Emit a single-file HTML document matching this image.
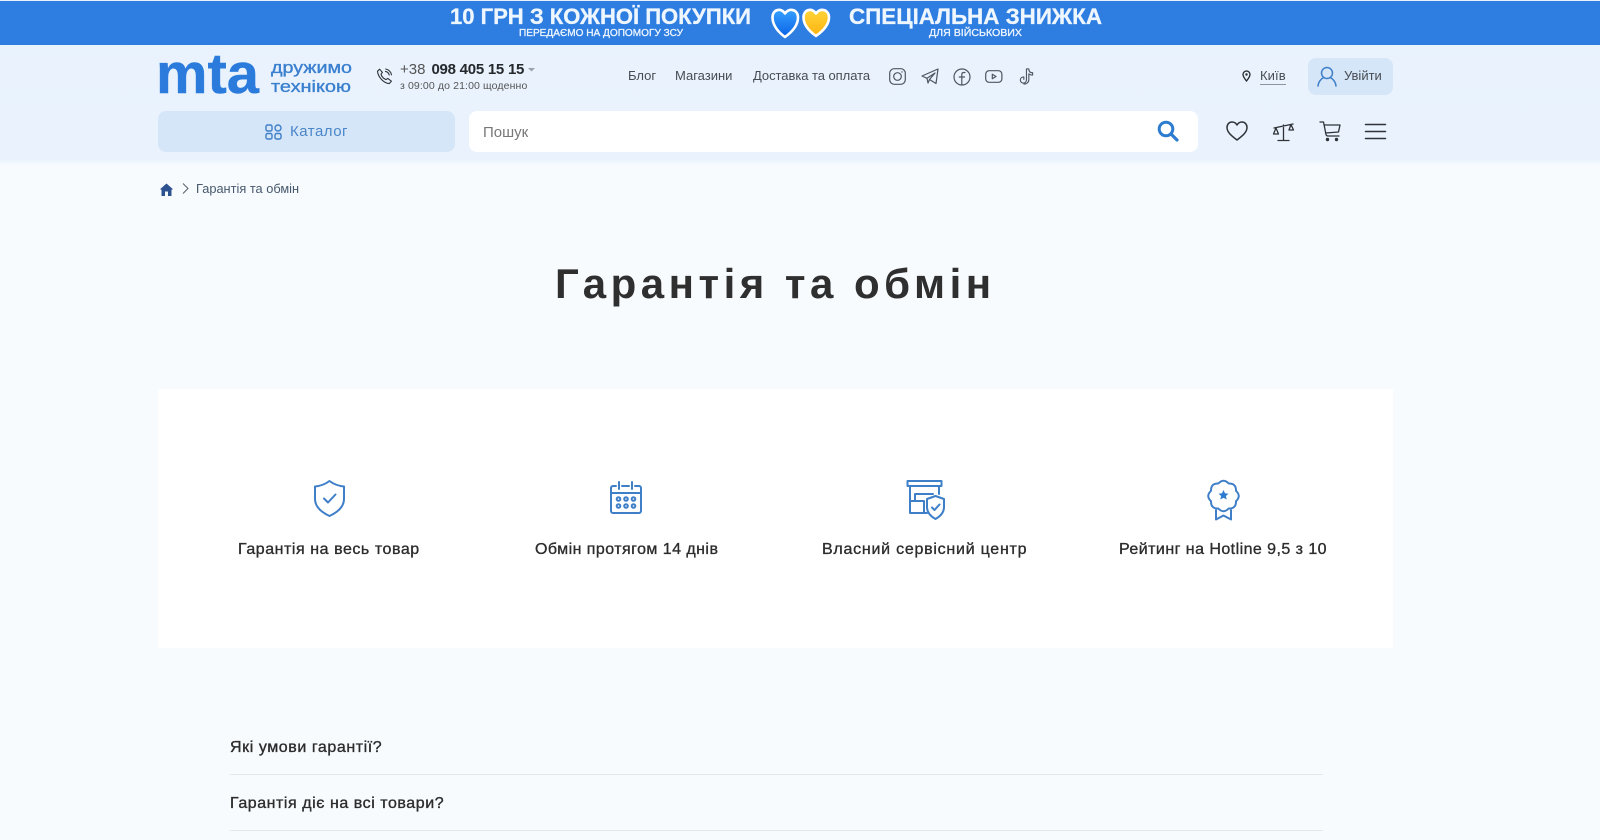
<!DOCTYPE html>
<html lang="uk"><head><meta charset="utf-8"><title>Гарантія та обмін</title>
<style>
*{box-sizing:border-box}
html,body{margin:0;padding:0}
body{width:1600px;height:840px;overflow:hidden;position:relative;background:#f7fbfe;font-family:"Liberation Sans","Noto Sans CJK SC",sans-serif;color:#2d2d2d}
.a{position:absolute;white-space:nowrap}
.m{-webkit-text-stroke:.35px currentColor}
svg{position:absolute;overflow:visible}
.i{fill:none;stroke:#3f7fc8;stroke-width:2;stroke-linecap:round;stroke-linejoin:round}
.g{fill:none;stroke:#4d5661;stroke-width:1.2;stroke-linecap:round;stroke-linejoin:round}
.d{fill:none;stroke:#2f3338;stroke-width:1.5;stroke-linecap:round;stroke-linejoin:round}
</style></head><body>
<div class="a" style="left:0;top:0;width:1600px;height:165px;background:linear-gradient(#e8f2fd 0,#eaf3fd 160px,#f7fbfe 165px)"></div>
<div class="a" style="left:0;top:1px;width:1600px;height:44px;background:#2e7de0"></div>
<svg style="left:0;top:0" width="1600" height="45" font-family="Liberation Sans" fill="#eef6ff" text-anchor="start">
<defs><linearGradient id="b" x1="0" y1="0" x2="0" y2="1"><stop offset="0" stop-color="#35a0ff"/><stop offset="1" stop-color="#0a62e6"/></linearGradient><linearGradient id="y" x1="0" y1="0" x2="0" y2="1"><stop offset="0" stop-color="#ffd43a"/><stop offset="1" stop-color="#fdb40f"/></linearGradient></defs>
<text x="450" y="24" font-size="22" font-weight="700" stroke="#eef6ff" stroke-width=".3" textLength="301" lengthAdjust="spacingAndGlyphs">10 ГРН З КОЖНОЇ ПОКУПКИ</text>
<text x="519" y="36" font-size="10.5" textLength="164" lengthAdjust="spacingAndGlyphs" stroke="#eef6ff" stroke-width=".3">ПЕРЕДАЄМО НА ДОПОМОГУ ЗСУ</text>
<text x="849" y="24" font-size="22" font-weight="700" stroke="#eef6ff" stroke-width=".3" textLength="253" lengthAdjust="spacingAndGlyphs">СПЕЦІАЛЬНА ЗНИЖКА</text>
<text x="929" y="36" font-size="10.5" textLength="93" lengthAdjust="spacingAndGlyphs" stroke="#eef6ff" stroke-width=".3">ДЛЯ ВІЙСЬКОВИХ</text>
<path d="M816 36C809 31 803.500 25 803.500 17.500C803.500 9 812.500 7.500 816 13.500C819.500 7.500 829 9 829 17.500C829 25 823 31 816 36Z" fill="url(#y)" stroke="#fff" stroke-width="2.6" stroke-linejoin="round"/>
<path d="M785 37C778 32 772.500 25 772.500 17.500C772.500 9 781.500 7.500 785 13.500C788.500 7.500 798 9 798 17.500C798 25 792 32 785 37Z" fill="url(#b)" stroke="#fff" stroke-width="2.6" stroke-linejoin="round"/>
</svg>

<svg style="left:0;top:0" width="400" height="110" font-family="Liberation Sans">
<text x="156" y="93" font-size="57" font-weight="700" fill="#2b7bdc" stroke="#2b7bdc" stroke-width=".4" textLength="103" lengthAdjust="spacingAndGlyphs">mta</text>
<text x="271" y="73" font-size="17" fill="#3b80cf" stroke="#3b80cf" stroke-width=".35" textLength="81" lengthAdjust="spacingAndGlyphs">дружимо</text>
<text x="271" y="92" font-size="17" fill="#3b80cf" stroke="#3b80cf" stroke-width=".35" textLength="80" lengthAdjust="spacingAndGlyphs">технікою</text>
</svg>
<svg style="left:376px;top:68px" width="17" height="17" viewBox="0 0 17 17"><path class="d" style="stroke-width:1.1" d="M1.5 3.2 3.6 1.2 6.4 4.4 5 6.2C5.600 8.400 7.600 10.600 10 11.600L11.800 10.400 15.400 13.200 13.200 15.600C7.500 15 2 9 1.500 3.200ZM9.500 3.400C11.500 3.800 12.800 5 13.200 7M9.700 1C12.700 1.500 15 3.800 15.500 6.800"/></svg>
<div class="a" style="left:400px;top:61px;line-height:18px;font-size:15px;color:#555">+38<b style="color:#25282c;font-weight:700;letter-spacing:-.25px;margin-left:6px">098 405 15 15</b></div>
<svg style="left:528px;top:68px" width="7" height="4"><path d="M0 0H7L3.500 3.500Z" fill="#9aa3ad"/></svg>
<div class="a" style="left:400px;top:79px;line-height:14px;font-size:10.500px;color:#555;letter-spacing:.12px">з 09:00 до 21:00 щоденно</div>

<div class="a" style="left:628px;top:68px;line-height:16px;font-size:13px;color:#474c52">Блог</div>
<div class="a" style="left:675px;top:68px;line-height:16px;font-size:13px;color:#474c52">Магазини</div>
<div class="a" style="left:753px;top:68px;line-height:16px;font-size:13px;color:#474c52;letter-spacing:-.05px">Доставка та оплата</div>

<svg style="left:889px;top:68px" width="17" height="17" viewBox="0 0 17 17"><rect class="g" x=".7" y=".7" width="15.600" height="15.600" rx="4.500"/><circle class="g" cx="8.500" cy="8.500" r="3.800"/><circle cx="13" cy="4" r=".7" fill="#4d5661"/></svg>
<svg style="left:921px;top:68px" width="18" height="17" viewBox="0 0 18 17"><path class="g" d="M17 1 1 8 6 10.300 14 5 8.500 11.500 15 15.500ZM6 10.300 7 15 8.500 11.500"/></svg>
<svg style="left:953px;top:68px" width="18" height="18" viewBox="0 0 18 18"><circle class="g" cx="9" cy="9" r="8"/><path class="g" d="M12 4.500H10.800C9.500 4.500 8.800 5.300 8.800 6.500V16.800M6.300 9H11.500"/></svg>
<svg style="left:985px;top:70px" width="18" height="13" viewBox="0 0 18 13"><rect class="g" x=".7" y=".7" width="16.200" height="11.600" rx="3.500"/><path class="g" d="M7.300 4.200 11 6.500 7.300 8.800Z"/></svg>
<svg style="left:1018px;top:68px" width="16" height="17" viewBox="0 0 16 18"><path class="g" d="M8.500 1V12.500C8.500 14.500 7 16 5.300 16 3.500 16 2 14.600 2 12.700 2 10.800 3.500 9.500 5.700 9.500V12M8.500 1H11C11 3.500 12.500 5 15 5V7.500C13 7.500 11.800 7 11 6.200V12.500C11 15 8.800 17 5.800 17"/></svg>

<svg style="left:1242px;top:70px" width="9" height="12" viewBox="0 0 9 12"><path d="M4.500 11C2.500 8.500 1 6.500 1 4.500A3.500 3.500 0 0 1 8 4.500C8 6.500 6.500 8.500 4.500 11Z" fill="none" stroke="#25282c" stroke-width="1.300"/><circle cx="4.500" cy="4.500" r="1.200" fill="#25282c"/></svg>
<div class="a" style="left:1260px;top:68px;line-height:16px;font-size:13px;color:#474c52;letter-spacing:.1px">Київ</div>
<div class="a" style="left:1260px;top:84px;width:26px;height:1px;background:#8d949c"></div>
<div class="a" style="left:1308px;top:58px;width:85px;height:37px;border-radius:8px;background:#d6e6f9"></div>
<svg style="left:1317px;top:66px" width="20" height="21" viewBox="0 0 20 21"><circle class="i" style="stroke-width:1.500" cx="10" cy="7" r="5.500"/><path class="i" style="stroke-width:1.500" d="M1 20C1.500 15.500 4.500 12.500 6.500 11.700M19 20C18.500 15.500 15.500 12.500 13.500 11.700"/></svg>
<div class="a" style="left:1344px;top:68px;line-height:16px;font-size:13px;color:#474c52">Увійти</div>

<div class="a" style="left:158px;top:111px;width:297px;height:41px;border-radius:8px;background:#d6e6f9"></div>
<svg style="left:265px;top:124px" width="17" height="16" viewBox="0 0 17 16"><g class="i" style="stroke-width:1.400"><rect x="1" y="1" width="6" height="6" rx="1.500"/><circle cx="13" cy="4" r="3"/><rect x="1" y="9.500" width="6" height="5.500" rx="1.500"/><rect x="10" y="9.500" width="6" height="5.500" rx="1.500"/></g></svg>
<div class="a" style="left:290px;top:122px;line-height:19px;font-size:15px;color:#4a86c8;letter-spacing:.5px">Каталог</div>
<div class="a" style="left:469px;top:111px;width:729px;height:41px;border-radius:8px;background:#fff"></div>
<div class="a" style="left:483px;top:123px;line-height:19px;font-size:15px;color:#777">Пошук</div>
<svg style="left:1157px;top:120px" width="22" height="22" viewBox="0 0 22 22"><circle cx="9" cy="9" r="6.800" fill="none" stroke="#2e7cd0" stroke-width="3"/><path d="M14 14 20 20" stroke="#2e7cd0" stroke-width="3.200" stroke-linecap="round"/></svg>
<svg style="left:1226px;top:121px" width="22" height="20" viewBox="0 0 22 20"><path class="d" d="M11 19C5 14.500 1 11 1 6.500 1 3 3.500 1 6 1 8.200 1 10 2.200 11 4 12 2.200 13.800 1 16 1 18.500 1 21 3 21 6.500 21 11 17 14.500 11 19Z"/></svg>
<svg style="left:1272px;top:122px" width="23" height="20" viewBox="0 0 23 20"><path class="d" style="stroke-width:1.300" d="M11.500 3V18.500M6 18.500H17M2 6 21 2M4 6 1.500 12H6.500ZM19 2.500 17 8H21.500Z"/></svg>
<svg style="left:1319px;top:121px" width="22" height="21" viewBox="0 0 22 21"><path class="d" style="stroke-width:1.300" d="M1 1H4.500L7 13.500C7.200 14.500 7.800 15 9 15H20M5 4H21L19.500 11 6.500 12"/><circle cx="8.500" cy="18.500" r="1.700" fill="#2f3338"/><circle cx="17.500" cy="18.500" r="1.700" fill="#2f3338"/></svg>
<svg style="left:1365px;top:123px" width="21" height="17" viewBox="0 0 21 17"><path class="d" d="M.5 1.500H20.500M.5 8.500H20.500M.5 15.500H20.500"/></svg>

<svg style="left:160px;top:183px" width="13" height="13" viewBox="0 0 13 13"><path d="M6.500 .5 13 6.200 11.500 6.800V13H8V8.500H5V13H1.500V6.800L0 6.200Z" fill="#2e528f"/></svg>
<svg style="left:182px;top:183px" width="7" height="11" viewBox="0 0 7 11"><path d="M1 .5 6 5.500 1 10.500" fill="none" stroke="#555e69" stroke-width="1"/></svg>
<div class="a" style="left:196px;top:181px;line-height:16px;font-size:12.800px;color:#47586c">Гарантія та обмін</div>

<div class="a" style="left:555px;top:259px;line-height:50px;font-size:42px;font-weight:700;color:#2f2f2f;letter-spacing:4.500px">Гарантія та обмін</div>

<div class="a" style="left:158px;top:389px;width:1235px;height:259px;background:#fff"></div>

<svg style="left:314px;top:480px" width="31" height="37" viewBox="0 0 31 37"><path class="i" d="M15.500 1C19.500 4 25 6 30 6.500V19C30 27 23 32.500 15.500 36 8 32.500 1 27 1 19V6.500C6 6 11.500 4 15.500 1Z"/><path class="i" d="M10 18.500 14 22.500 21.500 14.500"/></svg>
<svg style="left:610px;top:481px" width="32" height="33" viewBox="0 0 32 33"><path class="i" d="M6 5H3A2 2 0 0 0 1 7V30A2 2 0 0 0 3 32H29A2 2 0 0 0 31 30V7A2 2 0 0 0 29 5H25M12 5H19M1 12H31M9 1V8M22 1V8"/><g fill="none" stroke="#3f7fc8" stroke-width="2"><circle cx="8.500" cy="18" r="1.800"/><circle cx="16" cy="18" r="1.800"/><circle cx="23.500" cy="18" r="1.800"/><circle cx="8.500" cy="25" r="1.800"/><circle cx="16" cy="25" r="1.800"/><circle cx="23.500" cy="25" r="1.800"/></g></svg>
<svg style="left:906px;top:480px" width="39" height="40" viewBox="0 0 39 40"><path class="i" d="M1.500 1H35.500V6H1.500ZM4 6V33H21M33 6V14M9 14H27M9 14V21M4 21H18V33"/><path class="i" d="M29.500 16 38 19V27C38 33 34 36.500 29.500 39 25 36.500 21 33 21 27V19Z"/><path class="i" d="M26 27.500 28.500 30 33.500 24.500"/></svg>
<svg style="left:1208px;top:479px" width="31" height="42" viewBox="0 0 31 42"><path class="i" d="M28 11.800Q33.500 17 28 22.200Q28.200 29.700 20.700 29.500Q15.500 35 10.300 29.500Q2.800 29.700 3 22.200Q-2.500 17 3 11.800Q2.800 4.300 10.300 4.500Q15.500 -1 20.700 4.500Q28.200 4.300 28 11.800Z"/><path class="i" d="M8 31V40.500L15.500 36.500 23 40.500V31"/><path d="M15.500 11 17 14.300 20.500 14.700 17.900 17 18.700 20.500 15.500 18.700 12.300 20.500 13.100 17 10.500 14.700 14 14.300Z" fill="#2e7cd0"/></svg>

<div class="a m" style="left:238px;top:540px;line-height:20px;font-size:16px;letter-spacing:.55px">Гарантія на весь товар</div>
<div class="a m" style="left:535px;top:540px;line-height:20px;font-size:16px;letter-spacing:.45px">Обмін протягом 14 днів</div>
<div class="a m" style="left:822px;top:540px;line-height:20px;font-size:16px;letter-spacing:.75px">Власний сервісний центр</div>
<div class="a m" style="left:1119px;top:540px;line-height:20px;font-size:16px;letter-spacing:.45px">Рейтинг на Hotline 9,5 з 10</div>

<div class="a m" style="left:230px;top:738px;line-height:20px;font-size:16px;letter-spacing:.57px">Які умови гарантії?</div>
<div class="a" style="left:230px;top:774px;width:1093px;height:1px;background:#e4e8ed"></div>
<div class="a m" style="left:230px;top:794px;line-height:20px;font-size:16px;letter-spacing:.55px">Гарантія діє на всі товари?</div>
<div class="a" style="left:230px;top:830px;width:1093px;height:1px;background:#e4e8ed"></div>
</body></html>
